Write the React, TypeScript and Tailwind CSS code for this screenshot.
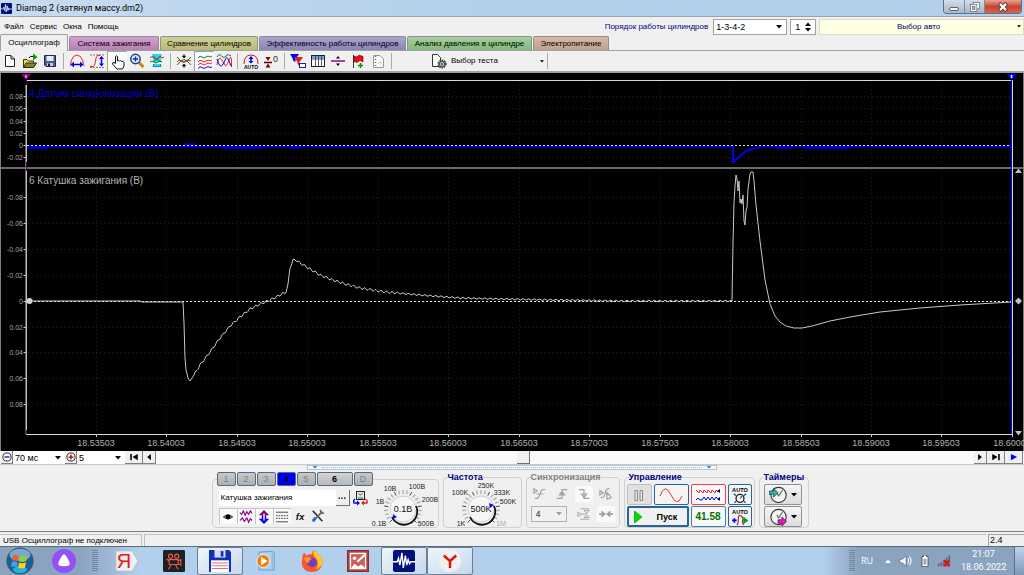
import clsx from "clsx";
import type { ReactNode } from "react";

type Point = [number, number];

const TIME_LABELS = [
  "18.53503", "18.54003", "18.54503", "18.55003", "18.55503", "18.56003", "18.56503",
  "18.57003", "18.57503", "18.58003", "18.58503", "18.59003", "18.59503", "18.60003"
];

const SYNC_SCALE: [string, number][] = [
  ["0.08", 23], ["0.06", 35], ["0.04", 48], ["0.02", 60], ["0", 72], ["-0.02", 84]
];

const COIL_SCALE: [string, number][] = [
  ["-0.08", 124], ["-0.06", 150], ["-0.04", 176], ["-0.02", 202], ["0", 228],
  ["0.02", 254], ["0.04", 279], ["0.06", 305], ["0.08", 331]
];

const COIL_POINTS: Point[] = [
  [30, 228], [140, 228], [142, 229], [183, 229], [184, 250], [185, 285], [186, 297], [188, 305], [190, 308], [194, 302],
  [200, 292], [210, 279], [220, 265], [230, 253], [240, 244], [250, 236], [260, 231], [270, 227], [280, 222],
  [286, 219], [288, 212], [290, 195], [293, 187], [296, 187], [300, 190], [310, 196], [320, 202], [330, 206],
  [345, 211], [360, 215], [385, 219], [420, 222], [460, 225], [500, 226], [560, 227], [620, 228], [732, 228]
];

const SPIKE_POINTS: Point[] = [
  [732, 228], [733, 170], [734, 130], [735, 113], [736, 102], [737, 106], [738, 118], [739, 108], [740, 130],
  [741, 126], [742, 131], [743, 122], [744, 148], [745, 152], [746, 138], [747, 134], [748, 116], [750, 101],
  [751, 99], [753, 99], [754, 108], [756, 132], [760, 168], [765, 207], [770, 231], [775, 243], [780, 249], [786, 253],
  [794, 255], [802, 255], [812, 253], [830, 248], [850, 244], [880, 239], [920, 235], [960, 232], [1012, 229]
];

function rippled(points: Point[]): Point[] {
  const out: Point[] = [];
  for (let i = 1; i < points.length; i++) {
    const [x0, y0] = points[i - 1];
    const [x1, y1] = points[i];
    for (let x = x0; x < x1; x++) {
      const amp = x < 194 ? 0 : x < 400 ? 1.1 : 0.7;
      out.push([x, y0 + ((y1 - y0) * (x - x0)) / (x1 - x0) + amp * Math.sin(x * 1.15)]);
    }
  }
  return out;
}

const toPath = (points: Point[]) => "M" + points.map(([x, y]) => `${x} ${y.toFixed(1)}`).join("L");

function Icon({ children, className = "h-4 w-4" }: { children: ReactNode; className?: string }) {
  return (
    <svg viewBox="0 0 16 16" className={clsx("shrink-0", className)} fill="none" aria-hidden>
      {children}
    </svg>
  );
}

function Caret({ className = "fill-black" }: { className?: string }) {
  return (
    <svg viewBox="0 0 6 4" className={clsx("h-1 w-1.5 shrink-0", className)} aria-hidden>
      <path d="M0 0H6L3 3.5Z" />
    </svg>
  );
}

function AppMark({ className }: { className: string }) {
  return (
    <Icon className={className}>
      <rect width="16" height="16" rx="1.5" fill="#00107c" />
      <path d="M0 8.5H3L4 6L5 11L6.5 2L7.5 13L9 4L10 11L11 7L12 10L13 8.5H16" stroke="#fff" strokeWidth="1" />
    </Icon>
  );
}

/* ---------- title and menu ---------- */

function TitleBar() {
  return (
    <header className="flex h-4 items-center justify-between bg-gradient-to-r from-[#c7dcf0] via-[#b2cfec] to-[#b4d0ec] pl-px">
      <div className="flex items-center gap-1">
        <AppMark className="h-[11px] w-[11px]" />
        <h1 className="font-[Roboto,sans-serif] text-[9px] leading-4 text-black">Diamag 2 (затянул массу.dm2)</h1>
      </div>
      <div className="mr-0.5 flex h-3.5 self-start overflow-hidden rounded-b border border-t-0 border-[#5f6e80]">
        <button type="button" aria-label="Свернуть" className="grid w-[21px] place-items-center border-r border-[#7d8b9c] bg-gradient-to-b from-[#d3dfeb] to-[#a4b7cb]">
          <span className="mt-1 h-1 w-2.5 rounded-xs border border-[#5c6470] bg-white" />
        </button>
        <button type="button" aria-label="Восстановить" className="grid w-5 place-items-center border-r border-[#7d8b9c] bg-gradient-to-b from-[#d3dfeb] to-[#a4b7cb]">
          <Icon className="h-2.5 w-2.5">
            <rect x="5" y="1" width="10" height="10" fill="#fff" stroke="#4c5460" />
            <rect x="1" y="4" width="10" height="11" fill="#fff" stroke="#4c5460" />
            <rect x="4" y="7" width="4" height="5" fill="#b0c0d0" stroke="#4c5460" />
          </Icon>
        </button>
        <button type="button" aria-label="Закрыть" className="grid w-9 place-items-center bg-gradient-to-b from-[#e2a496] via-[#c9432c] to-[#d0664c]">
          <Icon className="h-2.5 w-2.5">
            <path d="M2 2L14 14M14 2L2 14" stroke="#5a3030" strokeWidth="6" />
            <path d="M3 3L13 13M13 3L3 13" stroke="#fff" strokeWidth="3.5" />
          </Icon>
        </button>
      </div>
    </header>
  );
}

function Combo({ label, value, options, className }: { label: string; value: string; options: string[]; className: string }) {
  return (
    <div className={clsx("relative bg-white text-[9px]", className)}>
      <select aria-label={label} defaultValue={value} className="h-full w-full appearance-none pl-0.5 outline-none">
        {options.map((o) => <option key={o}>{o}</option>)}
      </select>
      <span className="pointer-events-none absolute inset-y-0 right-1 flex items-center"><Caret /></span>
    </div>
  );
}

function MenuBar() {
  return (
    <div className="flex h-5 items-center border-t border-[#9aa3ad] bg-[#f0f0f0]">
      <nav className="flex gap-1.5 pl-1">
        {["Файл", "Сервис", "Окна", "Помощь"].map((m) => (
          <button key={m} type="button">{m}</button>
        ))}
      </nav>
      <span className="mr-[5px] ml-auto text-[#000080]">Порядок работы цилиндров</span>
      <Combo label="Порядок работы цилиндров" value="1-3-4-2" options={["1-3-4-2", "1-2-4-3"]} className="h-4 w-[74px] border border-[#a0a0a0]" />
      <div className="ml-[3px] flex h-4 w-[26px] items-center border border-[#a0a0a0] bg-white pr-1 pl-1 text-[9px]">
        <input aria-label="Номер цилиндра" defaultValue="1" className="w-2.5 min-w-0 outline-none" />
        <div className="ml-auto flex flex-col gap-0.5">
          <button type="button" aria-label="Больше" className="leading-none"><Caret className="rotate-180 fill-black" /></button>
          <button type="button" aria-label="Меньше" className="leading-none"><Caret /></button>
        </div>
      </div>
      <button type="button" className="ml-[3px] flex h-4 w-1/5 items-center border border-[#dcdcc4] bg-[#ffffe1] pr-0.5 text-[#000080]">
        <span className="flex-1 text-center">Выбор авто</span>
        <svg viewBox="0 0 6 4" className="h-[3px] w-1 shrink-0" aria-hidden><path d="M0 0H6L3 3.5Z" /></svg>
      </button>
    </div>
  );
}

const TABS = [
  { label: "Система зажигания", style: "w-[90px] bg-gradient-to-b from-[#d3a0d0] to-[#b97fb5]" },
  { label: "Сравнение цилиндров", style: "w-[98px] bg-gradient-to-b from-[#d0d09a] to-[#b9b974]" },
  { label: "Эффективность работы цилиндров", style: "w-[147px] bg-gradient-to-b from-[#aaa4d0] to-[#8a84b5]" },
  { label: "Анализ давления в цилиндре", style: "w-[125px] bg-gradient-to-b from-[#a4d09c] to-[#84b97c]" },
  { label: "Электропитание", style: "w-[76px] bg-gradient-to-b from-[#d8b8a8] to-[#c0a08e]" }
];

function Tabs() {
  return (
    <div role="tablist" className="flex h-[15px] items-end gap-px border-b border-[#a0a0a0] bg-[#f0f0f0] whitespace-nowrap">
      <button type="button" role="tab" aria-selected className="-mb-px h-[17px] w-[68px] shrink-0 rounded-t-xs border border-b-0 border-[#a0a0a0] bg-[#f0f0f0]">
        Осциллограф
      </button>
      {TABS.map((t) => (
        <button key={t.label} type="button" role="tab" aria-selected={false} className={clsx("h-[14px] shrink-0 rounded-t-xs border border-b-0 border-[#8f8f8f]", t.style)}>
          {t.label}
        </button>
      ))}
    </div>
  );
}

/* ---------- toolbar ---------- */

const TOOL_GROUPS: { name: string; pressed?: boolean; art: ReactNode }[][] = [
  [
    { name: "Новый", art: <path d="M3.5 2.5H9L12.5 6V13.5H3.5ZM9 2.5V6H12.5" fill="#fff" stroke="#222" /> },
    {
      name: "Открыть",
      art: (
        <>
          <path d="M1.5 14.5V6.5H5L6.5 8H11.5V10" fill="#e8dc60" stroke="#3a3600" />
          <path d="M1.5 14.5L4 10H14.5L11.5 14.5Z" fill="#8a8420" stroke="#2e2b00" />
          <path d="M7 5Q8 2.5 11 3.5" stroke="#000" />
          <path d="M11 0.5L15.5 4L11 7.5Z" fill="#00a000" />
        </>
      )
    },
    {
      name: "Сохранить",
      art: (
        <>
          <path d="M2.5 2.5H13.5V13.5H4L2.5 12Z" fill="#4a5c94" stroke="#202c54" />
          <rect x="4.5" y="3" width="7" height="5" fill="#e8ecf4" />
          <rect x="5" y="10" width="6" height="3" fill="#c8ccd4" />
          <rect x="6" y="10.5" width="2" height="2.5" fill="#101a40" />
        </>
      )
    }
  ],
  [
    {
      name: "Развёртка",
      art: (
        <>
          <path d="M1 13Q2 13 2 8Q4 2 8 2Q12 2 14 8Q14 13 15.5 13" stroke="#f02020" />
          <path d="M4 11.5H12" stroke="#0000ff" strokeWidth="1.5" />
          <path d="M5 8.5V14.500L1.5 11.5ZM11 8.5V14.500L14.5 11.5Z" fill="#0000ff" />
        </>
      )
    },
    {
      name: "Амплитуда",
      art: (
        <>
          <path d="M1 13.5H4Q6 13.5 6.5 8Q7 2.5 9 2.5H11" stroke="#f02020" />
          <path d="M1 2H15M1 14.5H15" stroke="#a04040" strokeDasharray="2 1" strokeWidth=".8" />
          <path d="M12.5 5V12" stroke="#0000ff" strokeWidth="1.5" />
          <path d="M10 6H15L12.5 3ZM10 10.5H15L12.5 13.5Z" fill="#0000ff" />
        </>
      )
    },
    {
      name: "Рука",
      pressed: true,
      art: <path d="M5.5 9.5V2.5Q6.5 1 7.5 2.5V7Q8.5 5.5 9.5 7Q11 6 11.5 7.5Q13.5 6.5 14 8.5V12L12.5 15H7L2.5 10Q2.5 8 4 8.5Z" fill="#fff" stroke="#111" />
    },
    {
      name: "Лупа",
      art: (
        <>
          <path d="M10 9.5L14.5 14" stroke="#b8860b" strokeWidth="2.8" />
          <circle cx="6.500" cy="6" r="4.700" fill="#cfe6ff" stroke="#25406a" strokeWidth="1.5" />
          <path d="M4 6H9M6.5 3.5V8.5" stroke="#2020c0" strokeWidth="1.3" />
        </>
      )
    },
    {
      name: "Фрагмент",
      art: (
        <>
          <path d="M3 1H13L11.5 9H4.500ZM4.500 11H11.5L13 14H3Z" fill="#20e0f0" />
          <path d="M4 3L12 9M12 3L4 9" stroke="#108090" />
          <path d="M1 5Q3 2 5 5T9 5T13 5L15 4" stroke="#f02020" />
          <path d="M1 9Q3 7 5 9T9 9T13 9" stroke="#008030" />
          <path d="M4.500 11V13.500H11.5V11" stroke="#2080c0" />
        </>
      )
    }
  ],
  [
    {
      name: "Совместить",
      art: (
        <>
          <path d="M1 4L5 8Q8 11 11 8L15 4" stroke="#008030" />
          <path d="M1 12L5 8Q8 5 11 8L15 12" stroke="#008030" />
          <path d="M1 9Q3 6 5 8T9 8T15 8" stroke="#f02020" />
          <path d="M8 1V4M8 12V15M6.500 3H9.500L8 5ZM6.500 13H9.500L8 11Z" fill="#000" stroke="#000" strokeWidth=".7" />
        </>
      )
    },
    {
      name: "Раздельно",
      pressed: true,
      art: (
        <>
          <path d="M1 4Q3 1 5 3T9 3T13 3L15 2" stroke="#008030" />
          <path d="M1 8Q3 5 5 7T9 7T13 7L15 6" stroke="#f02020" />
          <path d="M1 11Q3 8 5 10T9 10T13 10L15 9" stroke="#f02020" />
          <path d="M1 14.500Q3 11.500 5 13.500T9 13.500T13 13.500L15 13" stroke="#0000ff" />
        </>
      )
    },
    {
      name: "Наложить",
      art: (
        <>
          <path d="M1 4Q3 0 5.500 3T10 3T15 3" stroke="#008030" />
          <path d="M1 12Q2 3 5 6T9 12T13 7T15.500 14" stroke="#f02020" />
          <path d="M1 6Q4 16 6.500 12T10 5T15 13" stroke="#0000ff" />
        </>
      )
    }
  ],
  [
    {
      name: "Авто",
      art: (
        <>
          <path d="M1 11Q1 2 8 2Q15 2 15 11" stroke="#c02020" />
          <path d="M8 4V10" stroke="#0000ff" strokeWidth="1.5" />
          <path d="M5.500 6L8 3L10.500 6ZM5.500 8H10.500L8 10.500Z" fill="#0000ff" />
          <text x="8" y="15.500" textAnchor="middle" fontSize="5" fontWeight="700" fill="#000">AUTO</text>
        </>
      )
    },
    {
      name: "Обнулить",
      art: (
        <>
          <path d="M1 9.500H9" stroke="#600" strokeWidth="1.5" />
          <path d="M2.500 4H7.500L5 8ZM2.500 14.500H7.500L5 10.500Z" fill="#800000" />
          <text x="12.500" y="8.500" textAnchor="middle" fontSize="9" fill="#333">0</text>
        </>
      )
    }
  ],
  [
    {
      name: "Фильтр",
      art: (
        <>
          <path d="M0 1H9L5.500 6V9L3 7.500V6Z" fill="#0000ff" />
          <path d="M4 4H13L9.500 9V13L7.500 11V9Z" fill="#e02020" />
          <rect x="9.500" y="10.500" width="6" height="4" fill="#fff" stroke="#2020a0" />
        </>
      )
    },
    {
      name: "Таблица",
      art: (
        <>
          <rect x="1.500" y="2.500" width="13" height="11" fill="#fff" stroke="#222" />
          <rect x="2" y="3" width="12" height="2.500" fill="#5ab0e8" />
          <path d="M5.500 3V13M8.500 3V13M11.500 3V13M2 6H14" stroke="#334" strokeWidth=".8" />
        </>
      )
    },
    {
      name: "Линейка",
      art: (
        <>
          <path d="M1 8H15" stroke="#a00080" strokeWidth="1.5" />
          <path d="M6 5.500H10L8 3ZM6 10.500H10L8 13Z" fill="#000" />
        </>
      )
    },
    {
      name: "Добавить метку",
      art: (
        <>
          <path d="M3.500 2V15" stroke="#333" />
          <path d="M4 3L7 4L9 2L13 3.500V9L10 7.500L7 9.500L4 8.500Z" fill="#e81010" stroke="#700" strokeWidth=".6" />
          <path d="M10.500 10V15M8 12.500H13" stroke="#009010" strokeWidth="1.5" />
        </>
      )
    },
    {
      name: "Отчёт",
      art: (
        <>
          <path d="M3.500 2.500H10L13.500 6V14.500H3.500Z" fill="#fafafa" stroke="#999" />
          <path d="M5.500 3V14" stroke="#666" strokeDasharray="1 2" strokeWidth="1.5" />
          <path d="M8 11L10 9L12 10" stroke="#bbb" />
        </>
      )
    }
  ]
];

function ToolSeparator() {
  return (
    <div className="flex w-[7px] justify-center py-0.5">
      <div className="w-px bg-[#a8a8a8]" />
    </div>
  );
}

function Toolbar() {
  return (
    <div className="flex h-[22px] items-stretch border-b-2 border-[#a0a0a0] bg-[#f0f0f0]">
      {TOOL_GROUPS.map((group, i) => (
        <div key={i} className="flex">
          {group.map((tool) => (
            <button
              key={tool.name}
              type="button"
              aria-label={tool.name}
              className={clsx("grid w-5 place-items-center", tool.pressed && "border-t border-l border-[#a0a0a0] bg-[#fafafa]")}
            >
              <Icon>{tool.art}</Icon>
            </button>
          ))}
          <ToolSeparator />
        </div>
      ))}
      <button type="button" className="ml-9 flex w-[113px] items-center gap-1">
        <Icon>
          <path d="M1.500 1.500H6.500L9.500 4.500V13.500H1.500Z" fill="#fff" stroke="#333" />
          <circle cx="11" cy="11" r="3.600" fill="#c8d4c8" stroke="#3c483c" strokeWidth="2" strokeDasharray="1.5 .8" />
          <circle cx="11" cy="11" r="2.600" stroke="#3c483c" />
          <circle cx="11" cy="11" r="1" fill="#3c483c" />
        </Icon>
        <span>Выбор теста</span>
        <svg viewBox="0 0 6 4" className="ml-auto h-[3px] w-1 shrink-0" aria-hidden><path d="M0 0H6L3 3.5Z" /></svg>
      </button>
      <ToolSeparator />
    </div>
  );
}

/* ---------- oscilloscope ---------- */

function Scope() {
  const columns = TIME_LABELS.map((label, i) => ({ label, x: Math.round(96 + i * 70.45) }));
  const coil = toPath([...rippled(COIL_POINTS), ...SPIKE_POINTS]);
  return (
    <svg viewBox="0 0 1024 378" className="block h-auto w-full bg-black font-['Liberation_Sans',Arial,sans-serif]" role="img" aria-label="Осциллограмма">
      <path d="M.5 0V378M1023.5 0V378" stroke="#808080" />
      <g stroke="#26260c" strokeDasharray="1 3">
        {columns.slice(0, -1).map((c) => <path key={c.label} d={`M${c.x}.5 12V360`} />)}
        {[...SYNC_SCALE, ...COIL_SCALE].map(([v, y], i) => <path key={v + i} d={`M28 ${y}.5H1011`} />)}
      </g>

      <path d="M26 7.5H1012" stroke="#d8d8d8" />
      <path d="M25.5 12V361" stroke="#606060" />
      <path d="M26.5 12V361" stroke="#c0c0c0" />
      <path d="M26 361.5H1012" stroke="#d8d8d8" />
      <path d="M1 94.5H1023M1 95.5H1023" stroke="#6c6c6c" />
      <path d="M26.5 7V12M26.5 89V98M26.5 357V361" stroke="#600060" />

      <g fontSize="7" fill="#a8a8a8" textAnchor="end">
        {[...SYNC_SCALE, ...COIL_SCALE].map(([v, y], i) => (
          <text key={v + i} x="23" y={y + 3}>{v}</text>
        ))}
      </g>
      {[...SYNC_SCALE, ...COIL_SCALE].map(([v, y], i) => <path key={v + i} d={`M23.5 ${y}.5H26`} stroke="#c8c8c8" />)}

      <g fontSize="9" fill="#b0b0b0" textAnchor="middle">
        {columns.map((c) => (
          <g key={c.label}>
            <path d={`M${c.x}.5 361V364`} stroke="#c8c8c8" />
            <text x={c.x} y="373">{c.label}</text>
          </g>
        ))}
      </g>

      <text x="29" y="24" fontSize="10" fill="#0000d8">4 Датчик синхронизации (В)</text>
      <text x="29" y="111" fontSize="10" fill="#b4b4b4">6 Катушка зажигания (В)</text>

      <path d="M27 73.5H733V89L735 87L740 83L746 78L752 76L760 73.5H1011" stroke="#0000f0" strokeWidth="2" fill="none" />
      <path d="M27 75H48M222 75H262M290 75H300M776 75H793M804 75H850" stroke="#0000f0" strokeWidth="1.5" />
      <path d="M183 71.5H196" stroke="#0000f0" strokeWidth="2" />
      <path d="M27 72.5H1011" stroke="#e0e0e0" strokeDasharray="2 2" />

      <path d="M30 228.5H1011" stroke="#e8e8e8" strokeDasharray="2 2" />
      <path d={coil} stroke="#c8c8c8" strokeWidth="1" fill="none" />

      <path d="M1011.5 7V361" stroke="#0000ff" />
      <path d="M1012.5 7V361" stroke="#d8d8d8" />
      <path d="M21 1H31L26 7Z" fill="#900090" />
      <path d="M26 2V5" stroke="#fff" />
      <path d="M1006 1H1017L1011.5 7Z" fill="#0000ff" />
      <path d="M1011.5 2V5" stroke="#fff" strokeWidth="1.5" />
      <circle cx="29.500" cy="228" r="3" fill="#d0d0d0" />
      <path d="M1018.5 224.5L1022 228L1018.5 231.5L1015 228Z" fill="#c0c0c0" />
      <path d="M1018.5 95.5L1022 100H1015ZM1015 358H1022L1018.5 362.5Z" fill="#c0c0c0" />
    </svg>
  );
}

function NavButton({ label, className, children }: { label: string; className: string; children: ReactNode }) {
  return (
    <button type="button" aria-label={label} className={clsx("grid h-full place-items-center border-r border-b border-[#808080] bg-[#f0f0f0]", className)}>
      {children}
    </button>
  );
}

function TimeBar() {
  return (
    <div className="flex h-[14px] items-center border-b border-[#c8c8c8] bg-[#fafafa] px-px">
      <NavButton label="Сжать" className="w-3">
        <Icon className="h-2.5 w-2.5">
          <circle cx="8" cy="8" r="6.500" fill="#fff" stroke="#222" strokeWidth="1.5" />
          <path d="M4 8H12" stroke="#0000c0" strokeWidth="2" />
        </Icon>
      </NavButton>
      <Combo label="Развёртка" value="70 мс" options={["50 мс", "70 мс", "100 мс"]} className="h-full w-[52px]" />
      <NavButton label="Растянуть" className="w-3">
        <Icon className="h-2.5 w-2.5">
          <circle cx="8" cy="8" r="6.500" fill="#fff" stroke="#222" strokeWidth="1.5" />
          <path d="M4 8H12M8 4V12" stroke="#a00000" strokeWidth="2" />
        </Icon>
      </NavButton>
      <Combo label="Масштаб" value="5" options={["1", "5", "10"]} className="h-full w-12" />
      <NavButton label="В начало" className="w-[18px]">
        <Icon className="h-2.5 w-2.5"><path d="M2 3H4.500V13H2ZM14 3V13L5.500 8Z" fill="#000" /></Icon>
      </NavButton>
      <NavButton label="Назад" className="w-[13px]">
        <Icon className="h-2.5 w-2.5"><path d="M11 3V13L5 8Z" fill="#000" /></Icon>
      </NavButton>
      <input
        type="range"
        aria-label="Позиция"
        min={0}
        max={1000}
        defaultValue={448}
        className="h-full min-w-0 flex-1 appearance-none bg-[#fafafa] [&::-webkit-slider-thumb]:h-[13px] [&::-webkit-slider-thumb]:w-[13px] [&::-webkit-slider-thumb]:appearance-none [&::-webkit-slider-thumb]:border-r [&::-webkit-slider-thumb]:border-b [&::-webkit-slider-thumb]:border-[#707070] [&::-webkit-slider-thumb]:bg-[#f0f0f0]"
      />
      <NavButton label="Вперёд" className="w-[13px]">
        <Icon className="h-2.5 w-2.5"><path d="M5 3V13L11 8Z" fill="#000" /></Icon>
      </NavButton>
      <NavButton label="В конец" className="w-[18px]">
        <Icon className="h-2.5 w-2.5"><path d="M11.500 3H14V13H11.500ZM2 3V13L10.500 8Z" fill="#000" /></Icon>
      </NavButton>
      <NavButton label="Воспроизвести" className="w-[18px]">
        <Icon className="h-2.5 w-2.5"><path d="M3 3V13L13 8Z" fill="#0000ff" /></Icon>
      </NavButton>
    </div>
  );
}

/* ---------- control panel ---------- */

function Group({ title, muted, className, children }: { title: string; muted?: boolean; className: string; children: ReactNode }) {
  return (
    <fieldset className={clsx("h-14 rounded border border-[#d0d0d0]", className)}>
      <legend className={clsx("ml-1 h-2.5 text-[9px] leading-[10px] font-bold whitespace-nowrap", muted ? "text-[#808080]" : "text-[#000080]")}>{title}</legend>
      {children}
    </fieldset>
  );
}

type Mark = { text: string; x: number; y: number; dim?: boolean };

function Knob({ value, marks, pointer, className }: { value: string; marks: Mark[]; pointer: string; className: string }) {
  const ticks = Array.from({ length: 21 }, (_, i) => ((-225 + i * 13.5) * Math.PI) / 180);
  return (
    <svg viewBox="0 0 70 48" className={clsx("h-12 w-[70px] shrink-0 overflow-visible", className)} role="img" aria-label={value}>
      {ticks.map((a, i) => (
        <path
          key={i}
          d={`M${(35 + 15 * Math.cos(a)).toFixed(1)} ${(29 + 15 * Math.sin(a)).toFixed(1)}L${(35 + 19 * Math.cos(a)).toFixed(1)} ${(29 + 19 * Math.sin(a)).toFixed(1)}`}
          stroke={i % 4 === 0 ? "#444" : "#b4b4b4"}
          strokeWidth={i % 4 === 0 ? 1 : 1.5}
        />
      ))}
      <circle cx="35" cy="29" r="13" fill="#f6f6f6" stroke="#d0d0d0" />
      <path d="M48 26A13 13 0 0 1 24 37" fill="none" stroke="#111" strokeWidth="1.8" />
      <path d={pointer} fill="#0000ff" />
      <text x="35" y="32" textAnchor="middle" fontSize="9" fill="#111">{value}</text>
      {marks.map((m) => (
        <text key={m.text} x={m.x} y={m.y} textAnchor="middle" fontSize="7" fill={m.dim ? "#aaa" : "#222"}>{m.text}</text>
      ))}
    </svg>
  );
}

const CHANNELS = ["1", "2", "3", "4", "5", "6", "D"];

const CHANNEL_TOOLS: { name: string; pressed: boolean; art: ReactNode }[] = [
  {
    name: "Видимость",
    pressed: true,
    art: (
      <>
        <path d="M2.500 8Q8 3 13.500 8Q8 12 2.500 8Z" fill="#777" stroke="#444" />
        <circle cx="8" cy="8" r="2.800" fill="#000" />
      </>
    )
  },
  { name: "Форма", pressed: true, art: <path d="M1 3L3 5L5 1L7 6L9 2L11 5L13 1L15 4M1 12L4 9L6 13L9 9L11 14L13 10L15 12" stroke="#900090" strokeWidth="1.3" /> },
  {
    name: "Инвертировать",
    pressed: true,
    art: (
      <>
        <path d="M8 0L14 6H10.500V8H5.500V6H2Z" fill="#800080" />
        <path d="M8 16L14 10H10.500V8H5.500V10H2Z" fill="#0000ff" />
        <path d="M8 4V12" stroke="#fff" strokeWidth="1.5" />
      </>
    )
  },
  {
    name: "Уровни",
    pressed: true,
    art: (
      <>
        <path d="M1 2.500H15M1 13.500H15" stroke="#333" />
        <path d="M1 6.500H15M1 9.500H15" stroke="#333" strokeDasharray="2 1" />
      </>
    )
  },
  { name: "Функция", pressed: false, art: <text x="8" y="12" textAnchor="middle" fontSize="11" fontStyle="italic" fontWeight="700" fill="#111">fx</text> },
  {
    name: "Настройки",
    pressed: false,
    art: (
      <>
        <path d="M2 2L13 14" stroke="#333" strokeWidth="2" />
        <path d="M13 3L4 12" stroke="#667" strokeWidth="2" />
        <path d="M5.500 10L2 14" stroke="#2870d0" strokeWidth="3.500" />
        <path d="M10.500 1L12 4.500L15 5" stroke="#556" strokeWidth="1.5" />
      </>
    )
  }
];

function ChannelGroup() {
  return (
    <fieldset className="h-14 w-[227px] rounded border border-[#d0d0d0]">
      <legend className="ml-1 flex h-[14px] gap-px text-[9px]">
        {CHANNELS.map((c) => (
          <button
            key={c}
            type="button"
            className={clsx(
              "h-[14px] rounded-xs border border-[#4c6c8c] leading-3",
              c === "6" ? "w-9" : "w-[19px]",
              c === "4" && "bg-[#0000f0] font-bold text-black",
              c === "6" && "bg-gradient-to-b from-[#d4d4d4] to-[#b8b8b8] font-bold text-black",
              c !== "4" && c !== "6" && "bg-gradient-to-b from-[#c8c8c8] to-[#b0b0b0] text-[#808080]"
            )}
          >
            {c}
          </button>
        ))}
      </legend>
      <div className="flex">
        <div className="flex w-[155px] flex-col gap-0.5 pt-1 pl-1.5">
          <div className="flex items-center gap-0.5">
            <div className="flex h-4 w-[132px] bg-white">
              <input aria-label="Имя канала" defaultValue="Катушка зажигания" className="min-w-0 flex-1 pl-0.5 outline-none" />
              <button type="button" aria-label="Выбрать датчик" className="grid w-3.5 place-items-center border-r border-b border-[#707070] bg-[#f0f0f0]">
                <Icon className="h-2 w-2"><path d="M1 8H4M6.500 8H9.500M12 8H15" stroke="#000" strokeWidth="2.500" /></Icon>
              </button>
            </div>
            <button type="button" aria-label="Переключить вход">
              <Icon>
                <rect x="4.500" y="1.500" width="8" height="8" fill="#e4e8e4" stroke="#222" />
                <path d="M6.500 3.500L8 5L10.500 3.500M6 8H11" stroke="#333" strokeWidth=".8" />
                <path d="M3 9Q1 10 2 13H5" stroke="#0000ff" strokeWidth="1.3" />
                <path d="M13 9Q16 10 15 13H12" stroke="#e02020" strokeWidth="1.3" />
                <path d="M5 10.500V15.500L8 13Z" fill="#0000ff" />
                <path d="M12 10.500V15.500L9 13Z" fill="#e02020" />
              </Icon>
            </button>
          </div>
          <div className="flex">
            {CHANNEL_TOOLS.map((t) => (
              <button key={t.name} type="button" aria-label={t.name} className={clsx("grid h-4 w-[18px] place-items-center", t.pressed && "border-t border-l border-[#c4c4c4] bg-[#fafafa]")}>
                <Icon className="h-3.5 w-3.5">{t.art}</Icon>
              </button>
            ))}
          </div>
        </div>
        <Knob
          value="0.1В"
          pointer="M25 34L29 37L25 39Z"
          className="-mt-1.5"
          marks={[
            { text: "0.1В", x: 11, y: 46 }, { text: "1В", x: 12, y: 24 }, { text: "10В", x: 22, y: 11 },
            { text: "100В", x: 49, y: 9 }, { text: "200В", x: 62, y: 22 }, { text: "500В", x: 58, y: 46 }
          ]}
        />
      </div>
    </fieldset>
  );
}

const SYNC_TOOLS: { name: string; pressed?: boolean; d: string }[] = [
  { name: "Любой фронт", d: "M1 2V7L5 4.5ZM2 13Q7 14 8 8T14 3M4 8H12" },
  { name: "Передний фронт", d: "M2 13H8V3H14M5 9H11L8 5Z" },
  { name: "Задний фронт", pressed: true, d: "M2 3H8V13H14M5 8H11L8 12Z" },
  { name: "Вручную", d: "M1 4V9L5 6.5ZM2 12Q6 13 7 7T12 2M9 6V14L14 12L11 8ZM8 7L13 10" }
];

function SyncGroup() {
  return (
    <Group title="Синхронизация" muted className="w-[93px]">
      <div className="flex flex-col gap-1 px-1 pt-1">
        <div className="flex gap-1">
          {SYNC_TOOLS.map((t) => (
            <button key={t.name} type="button" aria-label={t.name} className={clsx("grid h-4 w-[18px] place-items-center", t.pressed && "bg-[#fafafa]")}>
              <Icon className="h-3.5 w-3.5"><path d={t.d} stroke="#a0a0a0" strokeWidth="1.3" /></Icon>
            </button>
          ))}
        </div>
        <div className="flex items-center gap-1">
          <div className="relative mr-1 h-4 w-9 border border-[#b0b0b0] bg-[#f0f0f0] text-[9px]">
            <select aria-label="Канал синхронизации" defaultValue="4" className="h-full w-full appearance-none pl-1 text-[#202020] outline-none">
              {["1", "2", "3", "4", "5", "6"].map((c) => <option key={c}>{c}</option>)}
            </select>
            <span className="pointer-events-none absolute inset-y-0 right-1 flex items-center"><Caret className="fill-[#a0a0a0]" /></span>
          </div>
          <button type="button" aria-label="Уровень" className="grid h-4 w-[18px] place-items-center">
            <Icon className="h-3.5 w-3.5"><path d="M1 6V11L5 8.5ZM4 2H14M5 8H12M4 14H14M8 4H14L11 7ZM8 12H14L11 9Z" stroke="#a0a0a0" /></Icon>
          </button>
          <button type="button" aria-label="Середина" className="grid h-4 w-[18px] place-items-center bg-[#fafafa]">
            <Icon className="h-3.5 w-3.5"><path d="M0 7H3V4L8 8L3 12V9H0ZM16 7H13V4L8 8L13 12V9H16Z" fill="#a0a0a0" /></Icon>
          </button>
        </div>
      </div>
    </Group>
  );
}

const CTRL = "grid h-[21px] place-items-center rounded-xs border";

function ControlGroup() {
  return (
    <Group title="Управление" className="w-[130px]">
      <div className="grid grid-cols-[25px_35px_35px_24px] gap-x-0.5 gap-y-px px-0.5 pt-0.5">
        <button type="button" aria-label="Пауза" className={clsx(CTRL, "border-[#c0c0c0] bg-[#e0e0e0]")}>
          <Icon><path d="M4 3.500H6.500V13.500H4ZM9 3.500H11.500V13.500H9Z" fill="#e8e8e8" stroke="#888" /></Icon>
        </button>
        <button type="button" aria-label="Синус" className={clsx(CTRL, "border-[#2a6496] bg-[#f4f4f4]")}>
          <svg viewBox="0 0 26 16" className="h-4 w-[26px]" fill="none" aria-hidden><path d="M2 9Q7 -5 13 8T24 9" stroke="#f03030" /></svg>
        </button>
        <button type="button" aria-label="Запись" className={clsx(CTRL, "border-[#f04040] bg-[#f8f8f8]")}>
          <svg viewBox="0 0 28 16" className="h-4 w-7" fill="none" aria-hidden>
            <path d="M2 3L5 6L6 3L9 6L10 3L13 6L14 3L17 6L18 3L21 6L22 3L24 5" stroke="#f02020" />
            <path d="M2 13L4 11L6 13L8 13L10 10L12 13L14 10L16 13L18 10L20 13L22 10L24 12" stroke="#0000e0" />
            <path d="M26 2V6L23 4ZM26 10V14L23 12Z" fill="#000060" />
          </svg>
        </button>
        <button type="button" aria-label="Автонастройка" className={clsx(CTRL, "border-[#2a6496] bg-[#f4f4f4]")}>
          <Icon className="h-[18px] w-[18px]">
            <text x="8" y="5" textAnchor="middle" fontSize="5" fontWeight="700" fill="#000">AUTO</text>
            <circle cx="8" cy="11" r="3.500" stroke="#222" strokeWidth="1.2" />
            <path d="M8 11L10 9M2.500 7L4.500 8.500M13.500 7L11.500 8.500M3 15L4.500 13.500M13 15L11.500 13.500" stroke="#2050a0" strokeWidth="1.2" />
          </Icon>
        </button>
        <button type="button" className="col-span-2 flex h-[21px] items-center gap-3 rounded-xs border-2 border-[#2a6496] bg-[#f0f0f0] pl-1 text-[9px] font-bold">
          <Icon className="h-3 w-3"><path d="M2 0V16L12 8Z" fill="#00e000" stroke="#00a000" /></Icon>
          Пуск
        </button>
        <output className={clsx(CTRL, "border-[#3a80b8] bg-[#f8f8f8] text-[10px] font-bold text-[#007000]")}>41.58</output>
        <button type="button" aria-label="Автосинхронизация" className={clsx(CTRL, "border-[#2a6496] bg-[#f4f4f4]")}>
          <Icon className="h-[18px] w-[18px]">
            <text x="8" y="5" textAnchor="middle" fontSize="5" fontWeight="700" fill="#000">AUTO</text>
            <path d="M1 11H5M3 9V13" stroke="#0000ff" strokeWidth="1.5" />
            <path d="M5 15Q6.500 15 6.500 10T9 7T10.500 11T11.500 15" stroke="#a02020" />
            <path d="M11 7.500V14.500L15.500 11Z" fill="#00a020" />
          </Icon>
        </button>
      </div>
    </Group>
  );
}

function TimerButton({ label, stop }: { label: string; stop?: boolean }) {
  return (
    <button type="button" aria-label={label} className="flex h-[21px] w-[38px] items-center gap-1 rounded-xs border border-[#909090] bg-gradient-to-b from-[#f6f6f6] to-[#dcdcdc] pl-1">
      <Icon className="h-[18px] w-[18px]">
        <circle cx="8.500" cy="8" r="6.800" fill="#f4f4f4" stroke="#333" />
        <path d="M8.500 9L12 3.500M8.500 9L7 6" stroke="#666" />
        {stop
          ? <path d="M8 10.500H11.500V8L15.500 12L11.500 16V13.500H8Z" fill="#e020c0" stroke="#500040" strokeWidth=".6" />
          : <path d="M0 4.500H4V2L8 6L4 10V7.500H0Z" fill="#30b0a8" stroke="#104040" strokeWidth=".6" />}
      </Icon>
      <Caret />
    </button>
  );
}

function ControlPanel() {
  return (
    <section className="flex flex-col items-center bg-[#f0f0f0] pb-[3px]">
      <div className="mb-0.5 flex h-[5px] w-2/5 items-center justify-between border border-[#b8c4d0] bg-[#f4f8fc] px-1">
        <svg viewBox="0 0 6 4" className="h-[3px] w-1.5 fill-[#2090e0]" aria-hidden><path d="M0 0H6L3 3.5Z" /></svg>
        <div className="mx-1 h-px flex-1 border-t border-dotted border-[#90c0e8]" />
        <svg viewBox="0 0 6 4" className="h-[3px] w-1.5 fill-[#2090e0]" aria-hidden><path d="M0 0H6L3 3.5Z" /></svg>
      </div>
      <div className="flex gap-1 pr-1">
        <ChannelGroup />
        <Group title="Частота" className="w-[79px]">
          <Knob
            value="500K"
            pointer="M43 23L48 25L44 28Z"
            className="-mt-0.5 ml-0.5"
            marks={[
              { text: "1K", x: 15, y: 46 }, { text: "100K", x: 14, y: 15 }, { text: "250K", x: 40, y: 8 },
              { text: "333K", x: 56, y: 15 }, { text: "500K", x: 62, y: 24 }, { text: "1M", x: 55, y: 46, dim: true }
            ]}
          />
        </Group>
        <SyncGroup />
        <ControlGroup />
        <Group title="Таймеры" className="w-[50px]">
          <div className="flex flex-col gap-px pt-0.5 pl-1">
            <TimerButton label="Таймер запуска" />
            <TimerButton label="Таймер остановки" stop />
          </div>
        </Group>
      </div>
    </section>
  );
}

function StatusBar() {
  return (
    <div className="flex h-[15px] items-stretch gap-0.5 border-t border-[#808080] bg-[#f0f0f0] pt-0.5 leading-3">
      <div className="w-[142px] border-t border-r border-[#c0c0c0] pl-[3px] whitespace-nowrap">USB Осциллограф не подключен</div>
      <div className="flex-1 border-t border-l border-[#c0c0c0]" />
      <div className="w-9 border-t border-l border-[#a0a0a0] pl-px text-[9px] leading-[11px]">2.4</div>
    </div>
  );
}

/* ---------- desktop taskbar ---------- */

const TASKS: { name: string; open?: boolean; art: ReactNode }[] = [
  {
    name: "Видеоредактор",
    art: (
      <>
        <rect width="16" height="16" rx="1" fill="#1c2028" />
        <circle cx="5.500" cy="4.500" r="1.500" stroke="#e06040" strokeWidth=".8" />
        <circle cx="10" cy="4.500" r="1.500" stroke="#e06040" strokeWidth=".8" />
        <path d="M4.500 7H11V10.500H4.500ZM11 8L13 7V11L11 10M6 10.500L4 14M9 10.500L11 14M2.500 6.500L4.500 8" stroke="#e06040" strokeWidth=".8" />
      </>
    )
  },
  {
    name: "Total Commander",
    open: true,
    art: (
      <>
        <path d="M0 0H14.500L16 1.500V16H0Z" fill="#1030b8" />
        <rect x="4" y="0" width="8" height="5.500" fill="#d8dce8" />
        <rect x="8.500" y=".8" width="2" height="4" fill="#1030b8" />
        <rect x="1.500" y="7.500" width="13" height="8.500" fill="#fff" />
        <path d="M2 9.500H14M2 11.500H14M2 13.500H14" stroke="#e87070" strokeWidth=".8" />
      </>
    )
  },
  {
    name: "Проигрыватель",
    art: (
      <>
        <path d="M3 1.500L12.500 1L14 2V14.500L3 14.500Z" fill="#a8d4f0" stroke="#5898c8" strokeWidth=".6" />
        <path d="M12.500 1V14.500" stroke="#78b0d8" strokeWidth=".6" />
        <circle cx="6" cy="8" r="4.700" fill="#f08010" stroke="#fff" strokeWidth=".6" />
        <path d="M4.500 5V11L9 8Z" fill="#fff" />
      </>
    )
  },
  {
    name: "Firefox",
    art: (
      <>
        <path d="M1 6Q1 3 2.500 2L4 4Q6 2.500 8 3Q8 1 9.500 0Q11 2 13 3.500Q16 6 15.500 9.500Q14.500 16 8 16Q1.500 16 .5 10Z" fill="#f8582c" />
        <path d="M9.500 0Q11 2 13 3.500Q16 6 15.500 9.500Q14.500 13 11 14Q13.500 9 11 6Q8 4 9.500 0Z" fill="#ffc828" />
        <circle cx="8" cy="9" r="3.500" fill="#7040c0" />
        <path d="M2 6Q5 4.500 8 6.500Q5.500 7 6 9Q4 10 3 8Z" fill="#ff9820" />
      </>
    )
  },
  {
    name: "Просмотр",
    art: (
      <>
        <rect x=".5" y=".5" width="15" height="15" fill="#c04848" stroke="#8c2c2c" />
        <rect x="2.500" y="2.500" width="11" height="11" fill="#c86060" stroke="#fff" />
        <path d="M3 13L5.500 10L8 12L10.500 10.500L13 13Z" fill="#fff" />
        <circle cx="5.500" cy="6" r="1.300" fill="#fff" />
        <path d="M7.500 8.500L13 3.500" stroke="#fff" strokeWidth="1.5" />
      </>
    )
  },
  { name: "Diamag 2", open: true, art: null },
  {
    name: "Яндекс Браузер",
    open: true,
    art: (
      <>
        <circle cx="8" cy="8" r="8" fill="#f0f0f0" />
        <path d="M3.500 4L8 8V13M12.500 4L8 8" stroke="#e01010" strokeWidth="1.8" />
      </>
    )
  }
];

function Grip() {
  return (
    <svg viewBox="0 0 6 22" className="h-[22px] w-1.5 shrink-0" aria-hidden>
      <path d="M1 0V22M3 0V22M5 0V22" stroke="#4c6078" strokeDasharray="1 1" />
    </svg>
  );
}

function Taskbar() {
  return (
    <footer className="flex h-[29px] items-center border-t border-[#5c6c7c] bg-[linear-gradient(90deg,#8aa3bf_0,#8aa3bf_80px,#b2cfec_140px,#b2cfec_calc(100%-200px),#8aa3bf_calc(100%-165px),#8aa3bf_100%)] font-['Open_Sans',sans-serif]">
      <button type="button" aria-label="Пуск" className="ml-1.5">
        <Icon className="h-7 w-7">
          <circle cx="8" cy="8" r="7.600" fill="#1d5f94" stroke="#3d566e" strokeWidth=".4" />
          <ellipse cx="8" cy="4.500" rx="6" ry="3.500" fill="#7fa8c8" />
          <ellipse cx="8" cy="13" rx="4" ry="2" fill="#28b0e0" />
          <path d="M4 5Q5.500 4 7.300 5L6.800 8Q5 7.200 3.500 8Z" fill="#f06030" />
          <path d="M8 5.200Q10 6 12 5L11.500 8Q9.500 9 7.500 8.200Z" fill="#90d030" />
          <path d="M3.300 8.600Q5 7.800 6.700 8.700L6.200 11.500Q4.500 10.700 2.900 11.500Z" fill="#40a0f0" />
          <path d="M7.400 8.900Q9.500 9.700 11.400 8.700L10.900 11.700Q9 12.600 6.900 11.800Z" fill="#ffd020" />
        </Icon>
      </button>
      <button type="button" aria-label="Алиса" className="ml-[18px]">
        <Icon className="h-6 w-6">
          <circle cx="8" cy="8" r="8" fill="#9450f8" />
          <path d="M8 3.500Q9.500 4 11.500 8.500Q13 11.500 8 11.500Q3 11.500 4.500 8.500Q6.500 4 8 3.500Z" fill="#fff" />
        </Icon>
      </button>
      <div className="ml-4"><Grip /></div>
      <a href="#yandex" aria-label="Яндекс" className="ml-[17px]">
        <svg viewBox="0 0 24 24" className="h-6 w-6" aria-hidden>
          <path d="M1 2H17L23 12L17 22H1Z" fill="#f0f0f0" stroke="#b8b8b8" strokeWidth=".6" />
          <text x="9" y="19" textAnchor="middle" fontSize="20" fill="#e81818" fontFamily="Liberation Sans">Я</text>
        </svg>
      </a>
      <div className="ml-3 flex self-stretch">
        {TASKS.map((t) => (
          <button
            key={t.name}
            type="button"
            aria-label={t.name}
            className={clsx("grid w-[46px] place-items-center rounded-xs", t.open && "border border-[#6a8098] bg-gradient-to-br from-[#f0f5fa] to-[#c4d8ec]")}
          >
            {t.art ? <Icon className="h-[22px] w-[22px]">{t.art}</Icon> : <AppMark className="h-[22px] w-[22px]" />}
          </button>
        ))}
      </div>
      <div className="ml-auto flex items-center self-stretch text-white">
        <Grip />
        <span className="ml-1.5 w-[14px] text-[9px]">RU</span>
        <button type="button" aria-label="Скрытые значки" className="ml-2.5"><Caret className="rotate-180 fill-white" /></button>
        <button type="button" aria-label="Громкость" className="ml-2">
          <Icon className="h-3.5 w-3.5">
            <path d="M1 6H4L8 2V14L4 10H1Z" fill="#fff" stroke="#445" strokeWidth=".6" />
            <path d="M10 5Q12 8 10 11M12 3Q15.500 8 12 13" stroke="#fff" strokeWidth="1.2" />
          </Icon>
        </button>
        <button type="button" aria-label="Питание" className="ml-1.5">
          <Icon className="h-3 w-3">
            <path d="M4 2H6V0H10V2H12V15.500H4Z" fill="#fff" stroke="#334" />
            <rect x="6" y="5" width="4" height="8" fill="#9ab" />
          </Icon>
        </button>
        <button type="button" aria-label="Сеть" className="ml-1.5">
          <Icon className="h-3.5 w-3.5">
            <path d="M1 11H3V14H1ZM4 9H6V14H4ZM7 7H9V14H7ZM10 4H12V14H10ZM13 2H15V14H13Z" fill="#667" />
            <path d="M8 7L14 14M14 7L8 14" stroke="#e01010" strokeWidth="2.2" />
          </Icon>
        </button>
        <div className="ml-2.5 w-[45px] text-center font-[Roboto,sans-serif] text-[9px] leading-[13px]">
          <div>21:07</div>
          <div>18.06.2022</div>
        </div>
        <button type="button" aria-label="Свернуть все окна" className="ml-2 h-full w-2.5 border-l border-[#5c7088] bg-gradient-to-b from-[#c0d4e8] to-[#7c98b8]" />
      </div>
    </footer>
  );
}

export default function App() {
  return (
    <main className="flex min-h-screen flex-col bg-[#f0f0f0] font-['Liberation_Sans',Arial,sans-serif] text-[8px] leading-3 text-black">
      <TitleBar />
      <MenuBar />
      <Tabs />
      <Toolbar />
      <Scope />
      <TimeBar />
      <ControlPanel />
      <StatusBar />
      <Taskbar />
    </main>
  );
}
